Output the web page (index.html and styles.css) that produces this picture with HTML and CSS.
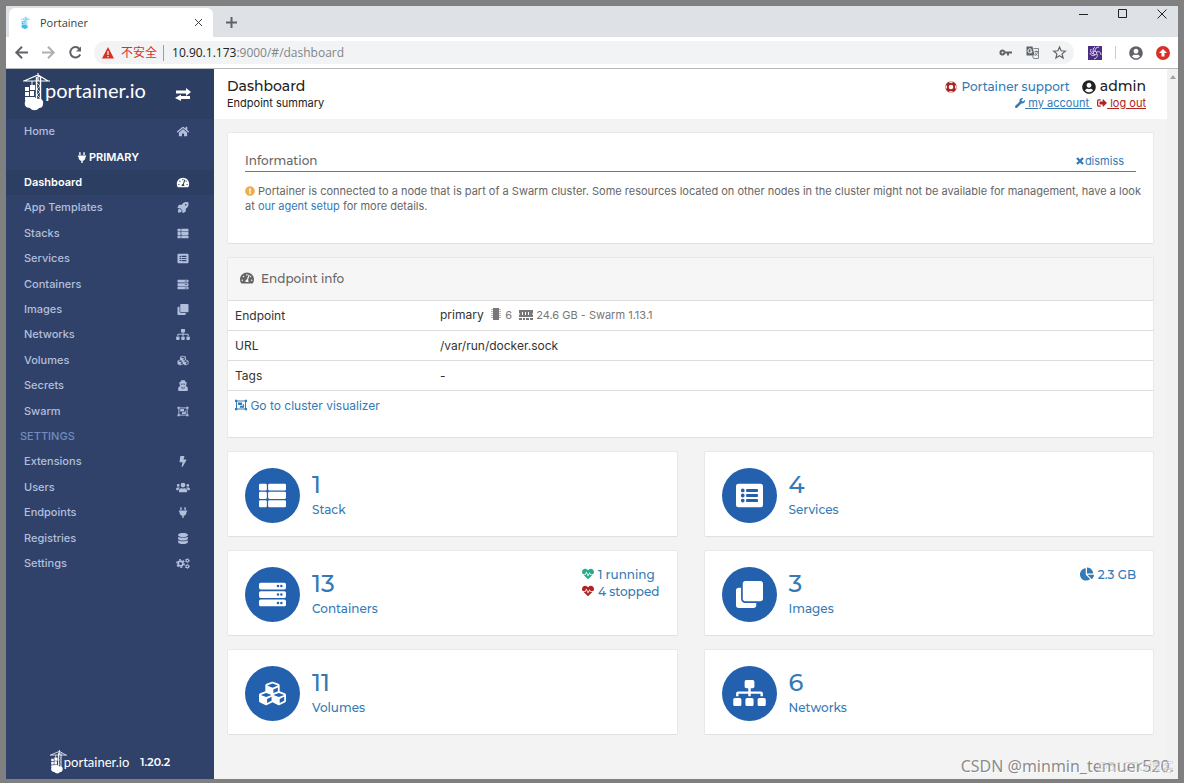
FILE: index.html
```html
<!DOCTYPE html>
<html lang="en">
<head>
<meta charset="utf-8">
<title>Portainer</title>
<link rel="stylesheet" href="styles.css">
</head>
<body>
<svg class="sprite" aria-hidden="true">
  <symbol id="i-home" viewBox="0 0 576 512"><path d="M280.37 148.26L96 300.11V464a16 16 0 0 0 16 16l112.06-.29a16 16 0 0 0 15.92-16V368a16 16 0 0 1 16-16h64a16 16 0 0 1 16 16v95.64a16 16 0 0 0 16 16.05L464 480a16 16 0 0 0 16-16V300L295.67 148.26a12.19 12.19 0 0 0-15.3 0zM571.6 251.47L488 182.56V44.05a12 12 0 0 0-12-12h-56a12 12 0 0 0-12 12v72.61L318.47 43a48 48 0 0 0-61 0L4.34 251.47a12 12 0 0 0-1.6 16.9l25.5 31A12 12 0 0 0 45.15 301l235.22-193.74a12.19 12.19 0 0 1 15.3 0L530.9 301a12 12 0 0 0 16.9-1.6l25.5-31a12 12 0 0 0-1.7-16.93z"/></symbol>
  <symbol id="i-plug" viewBox="0 0 384 512"><path d="M256 144V32c0-17.673 14.327-32 32-32s32 14.327 32 32v112h-64zm112 16H16c-8.837 0-16 7.163-16 16v32c0 8.837 7.163 16 16 16h16v32c0 77.406 54.969 141.971 128 156.796V512h64v-99.204c73.031-14.825 128-79.39 128-156.796v-32h16c8.837 0 16-7.163 16-16v-32c0-8.837-7.163-16-16-16zm-240-16V32c0-17.673-14.327-32-32-32S64 14.327 64 32v112h64z"/></symbol>
  <symbol id="i-gauge" viewBox="0 0 576 512"><path d="M288 32C128.94 32 0 160.94 0 320c0 52.8 14.25 102.26 39.06 144.8 5.61 9.62 16.3 15.2 27.44 15.2h443c11.14 0 21.83-5.58 27.44-15.2C561.75 422.26 576 372.8 576 320c0-159.06-128.94-288-288-288zm0 64c14.71 0 26.58 10.13 30.32 23.65-1.11 2.26-2.64 4.23-3.45 6.67l-9.22 27.67c-5.13 3.49-10.97 6.01-17.64 6.01-17.67 0-32-14.33-32-32S270.33 96 288 96zM96 384c-17.67 0-32-14.33-32-32s14.33-32 32-32 32 14.33 32 32-14.33 32-32 32zm48-160c-17.67 0-32-14.33-32-32s14.33-32 32-32 32 14.33 32 32-14.33 32-32 32zm246.77-72.41l-61.33 184C343.13 347.33 352 364.54 352 384c0 11.72-3.38 22.55-8.88 32H232.88c-5.5-9.45-8.88-20.28-8.88-32 0-33.94 26.5-61.43 59.9-63.59l61.34-184.01c4.17-12.56 17.73-19.45 30.36-15.17 12.57 4.19 19.35 17.79 15.17 30.36zm14.66 57.2l15.52-46.55c3.47-1.29 7.13-2.23 11.05-2.23 17.67 0 32 14.33 32 32s-14.33 32-32 32c-11.38-.01-20.89-6.28-26.57-15.22zM480 384c-17.67 0-32-14.33-32-32s14.33-32 32-32 32 14.33 32 32-14.33 32-32 32z"/></symbol>
  <symbol id="i-rocket" viewBox="0 0 512 512"><path fill-rule="evenodd" d="M505 19c-2-7-6-10-12-12C460 0 435 0 410 0 307 0 245 55 199 128H95c-16 0-35 12-43 26L3 253c-8 17 1 35 21 35h104l96 96v104c0 20 18 29 35 21l99-49c14-8 26-27 26-43V313c73-46 128-108 128-211 0-25 0-50-7-83zM384 168a40 40 0 1 1 0-80 40 40 0 0 1 0 80zM104 310c-60 0-84 40-84 182 110 0 182-24 182-84l-40-42z"/></symbol>
  <symbol id="i-thlist" viewBox="0 0 512 512"><path d="M24 32h101a24 24 0 0 1 24 24v80a24 24 0 0 1-24 24H24a24 24 0 0 1-24-24V56a24 24 0 0 1 24-24zM197 32h291a24 24 0 0 1 24 24v80a24 24 0 0 1-24 24H197a24 24 0 0 1-24-24V56a24 24 0 0 1 24-24zM24 184h101a24 24 0 0 1 24 24v88a24 24 0 0 1-24 24H24a24 24 0 0 1-24-24v-88a24 24 0 0 1 24-24zM197 184h291a24 24 0 0 1 24 24v88a24 24 0 0 1-24 24H197a24 24 0 0 1-24-24v-88a24 24 0 0 1 24-24zM24 344h101a24 24 0 0 1 24 24v88a24 24 0 0 1-24 24H24a24 24 0 0 1-24-24v-88a24 24 0 0 1 24-24zM197 344h291a24 24 0 0 1 24 24v88a24 24 0 0 1-24 24H197a24 24 0 0 1-24-24v-88a24 24 0 0 1 24-24z"/></symbol>
  <symbol id="i-listalt" viewBox="0 0 512 512"><path fill-rule="evenodd" d="M48 32h416a48 48 0 0 1 48 48v352a48 48 0 0 1-48 48H48a48 48 0 0 1-48-48V80a48 48 0 0 1 48-48zM128 124a36 36 0 1 0 0 72 36 36 0 0 0 0-72zm0 96a36 36 0 1 0 0 72 36 36 0 0 0 0-72zm0 96a36 36 0 1 0 0 72 36 36 0 0 0 0-72zM204 132a12 12 0 0 0-12 12v32a12 12 0 0 0 12 12h200a12 12 0 0 0 12-12v-32a12 12 0 0 0-12-12zm0 96a12 12 0 0 0-12 12v32a12 12 0 0 0 12 12h200a12 12 0 0 0 12-12v-32a12 12 0 0 0-12-12zm0 96a12 12 0 0 0-12 12v32a12 12 0 0 0 12 12h200a12 12 0 0 0 12-12v-32a12 12 0 0 0-12-12z"/></symbol>
  <symbol id="i-server" viewBox="0 0 512 512"><path fill-rule="evenodd" d="M32 32h448a32 32 0 0 1 32 32v64a32 32 0 0 1-32 32H32a32 32 0 0 1-32-32V64a32 32 0 0 1 32-32zm328 40a24 24 0 1 0 0 48 24 24 0 0 0 0-48zm64 0a24 24 0 1 0 0 48 24 24 0 0 0 0-48zM32 192h448a32 32 0 0 1 32 32v64a32 32 0 0 1-32 32H32a32 32 0 0 1-32-32v-64a32 32 0 0 1 32-32zm328 40a24 24 0 1 0 0 48 24 24 0 0 0 0-48zm64 0a24 24 0 1 0 0 48 24 24 0 0 0 0-48zM32 352h448a32 32 0 0 1 32 32v64a32 32 0 0 1-32 32H32a32 32 0 0 1-32-32v-64a32 32 0 0 1 32-32zm328 40a24 24 0 1 0 0 48 24 24 0 0 0 0-48zm64 0a24 24 0 1 0 0 48 24 24 0 0 0 0-48z"/></symbol>
  <symbol id="i-clone" viewBox="0 0 512 512"><path d="M464 0c26.51 0 48 21.49 48 48v288c0 26.51-21.49 48-48 48H176c-26.51 0-48-21.49-48-48V48c0-26.51 21.49-48 48-48h288M176 416c-44.112 0-80-35.888-80-80V128H48c-26.51 0-48 21.49-48 48v288c0 26.51 21.49 48 48 48h288c26.51 0 48-21.49 48-48v-48H176z"/></symbol>
  <symbol id="i-sitemap" viewBox="0 0 640 512"><path d="M128 352H32c-17.67 0-32 14.33-32 32v96c0 17.67 14.33 32 32 32h96c17.67 0 32-14.33 32-32v-96c0-17.67-14.33-32-32-32zm-24-80h192v48h48v-48h192v48h48v-57.59c0-21.17-17.23-38.41-38.41-38.41H344v-64h40c17.67 0 32-14.33 32-32V32c0-17.67-14.33-32-32-32H256c-17.67 0-32 14.33-32 32v96c0 17.67 14.33 32 32 32h40v64H94.41C73.23 224 56 241.23 56 262.41V320h48v-48zm264 80h-96c-17.67 0-32 14.33-32 32v96c0 17.67 14.33 32 32 32h96c17.67 0 32-14.33 32-32v-96c0-17.67-14.33-32-32-32zm240 0h-96c-17.67 0-32 14.33-32 32v96c0 17.67 14.33 32 32 32h96c17.67 0 32-14.33 32-32v-96c0-17.67-14.33-32-32-32z"/></symbol>
  <symbol id="i-cubes" viewBox="0 0 512 512"><path d="M488.6 250.2L392 214V105.5c0-15-9.3-28.4-23.4-33.7l-100-37.5c-8.1-3.1-17.1-3.1-25.3 0l-100 37.5c-14.1 5.3-23.4 18.7-23.4 33.7V214l-96.6 36.2C9.3 255.5 0 268.9 0 283.9V394c0 13.6 7.7 26.1 19.9 32.2l100 50c10.1 5.1 22.1 5.1 32.2 0l103.9-52 103.9 52c10.1 5.1 22.1 5.1 32.2 0l100-50c12.2-6.1 19.9-18.6 19.9-32.2V283.9c0-15-9.3-28.4-23.4-33.7zM358 214.8l-85 31.9v-68.2l85-37v73.3zM154 104.1l102-38.2 102 38.2v.6l-102 41.4-102-41.4v-.6zm84 291.1l-85 42.5v-79.1l85-38.8v75.4zm0-112l-102 41.4-102-41.4v-.6l102-38.2 102 38.2v.6zm240 112l-85 42.5v-79.1l85-38.8v75.4zm0-112l-102 41.4-102-41.4v-.6l102-38.2 102 38.2v.6z"/></symbol>
  <symbol id="i-secret" viewBox="0 0 448 512"><path fill-rule="evenodd" d="M96 100c20-4 30-60 62-96 14-10 42 12 66 12S276-6 290 4c32 36 42 92 62 96 30 6 64 18 64 28 0 8-14 16-32 22 4 50-2 100-34 136l40 14c34 12 58 50 58 90v90c0 18-14 32-32 32H32c-18 0-32-14-32-32v-90c0-40 24-78 58-90l40-14c-32-36-38-86-34-136-18-6-32-14-32-22 0-10 34-22 64-28zM124 176c4 30 14 44 42 44 26 0 38-12 44-34h28c6 22 18 34 44 34 28 0 38-14 42-44zM140 310l44 130 20-80-24-40zM308 310l-44 130-20-80 24-40z"/></symbol>
  <symbol id="i-group" viewBox="0 0 512 512"><path d="M64 88h384v336H64z" fill="none" stroke="currentColor" stroke-width="44"/><path d="M0 32h96v96H0zM416 32h96v96h-96zM0 384h96v96H0zM416 384h96v96h-96zM128 144h176v112H128zM336 224h48v144H208v-80h128z"/></symbol>
  <symbol id="i-bolt" viewBox="0 0 320 512"><path d="M296 160H180.6l42.6-129.8C227.2 15 215.7 0 200 0H56C44 0 33.8 8.9 32.2 20.8l-32 240C-1.7 275.2 9.5 288 24 288h118.7L96.6 482.5c-3.6 15.2 8 29.5 23.3 29.5 8.4 0 16.4-4.4 20.8-12l176-304c9.3-15.9-2.2-36-20.7-36z"/></symbol>
  <symbol id="i-users" viewBox="0 0 640 512"><path d="M96 96a64 64 0 1 1 0 128 64 64 0 0 1 0-128zM544 96a64 64 0 1 1 0 128 64 64 0 0 1 0-128zM320 32a112 112 0 1 1 0 224 112 112 0 0 1 0-224zM64 256h64c18 0 34 7 45 19-40 22-69 61-75 109H32c-18 0-32-14-32-32v-32c0-35 29-64 64-64zM512 256h64c35 0 64 29 64 64v32c0 18-14 32-32 32h-66c-6-48-35-87-75-109 11-12 27-19 45-19zM243 288h8c44 21 94 21 138 0h8c64 0 115 51 115 115v29c0 27-21 48-48 48H176c-27 0-48-21-48-48v-29c0-64 51-115 115-115z"/></symbol>
  <symbol id="i-database" viewBox="0 0 448 512"><path d="M448 73.143v45.714C448 159.143 347.667 192 224 192S0 159.143 0 118.857V73.143C0 32.857 100.333 0 224 0s224 32.857 224 73.143zM448 176v102.857C448 319.143 347.667 352 224 352S0 319.143 0 278.857V176c48.125 33.143 136.208 48.572 224 48.572S399.874 209.143 448 176zm0 160v102.857C448 479.143 347.667 512 224 512S0 479.143 0 438.857V336c48.125 33.143 136.208 48.572 224 48.572S399.874 369.143 448 336z"/></symbol>
  <symbol id="i-cogs" viewBox="0 0 640 512"><g fill="none" stroke="currentColor"><circle cx="205" cy="256" r="112" stroke-width="84"/><circle cx="205" cy="256" r="176" stroke-width="56" stroke-dasharray="92 92"/><circle cx="520" cy="122" r="62" stroke-width="52"/><circle cx="520" cy="122" r="98" stroke-width="34" stroke-dasharray="51 51"/><circle cx="520" cy="390" r="62" stroke-width="52"/><circle cx="520" cy="390" r="98" stroke-width="34" stroke-dasharray="51 51"/></g></symbol>
  <symbol id="i-warn" viewBox="0 0 512 512"><path d="M504 256c0 136.997-111.043 248-248 248S8 392.997 8 256C8 119.083 119.043 8 256 8s248 111.083 248 248zm-248 50c-25.405 0-46 20.595-46 46s20.595 46 46 46 46-20.595 46-46-20.595-46-46-46zm-43.673-165.346l7.418 136c.347 6.364 5.609 11.346 11.982 11.346h48.546c6.373 0 11.635-4.982 11.982-11.346l7.418-136c.375-6.874-5.098-12.654-11.982-12.654h-63.383c-6.884 0-12.356 5.78-11.981 12.654z"/></symbol>
  <symbol id="i-user" viewBox="0 0 496 512"><path d="M248 8C111 8 0 119 0 256s111 248 248 248 248-111 248-248S385 8 248 8zm0 96c48.6 0 88 39.4 88 88s-39.4 88-88 88-88-39.4-88-88 39.4-88 88-88zm0 344c-58.7 0-111.3-26.6-146.5-68.2 18.8-35.4 55.6-59.8 98.5-59.8 2.4 0 4.8.4 7.1 1.1 13 4.2 26.6 6.9 40.9 6.9 14.3 0 28-2.7 40.9-6.9 2.3-.7 4.7-1.1 7.1-1.1 42.9 0 79.7 24.4 98.5 59.8C359.3 421.4 306.7 448 248 448z"/></symbol>
  <symbol id="i-wrench" viewBox="0 0 512 512"><path d="M507.73 109.1c-2.24-9.03-13.54-12.09-20.12-5.51l-74.36 74.36-67.88-11.31-11.31-67.88 74.36-74.36c6.62-6.62 3.43-17.9-5.66-20.16-47.38-11.74-99.55.91-136.58 37.93-39.64 39.64-50.55 97.1-34.05 147.2L18.74 402.76c-24.99 24.99-24.99 65.51 0 90.5 24.99 24.99 65.51 24.99 90.5 0l213.21-213.21c50.12 16.71 107.47 5.68 147.37-34.22 37.07-37.07 49.7-89.32 37.91-136.73z"/></symbol>
  <symbol id="i-signout" viewBox="0 0 512 512"><path d="M497 273L329 441c-15 15-41 4.500-41-17v-96H152c-13.300 0-24-10.700-24-24v-96c0-13.300 10.700-24 24-24h136V88c0-21.400 25.900-32 41-17l168 168c9.300 9.400 9.300 24.600 0 34zM192 436v-40c0-6.600-5.400-12-12-12H96c-17.700 0-32-14.300-32-32V160c0-17.700 14.300-32 32-32h84c6.600 0 12-5.400 12-12V76c0-6.600-5.400-12-12-12H96c-53 0-96 43-96 96v192c0 53 43 96 96 96h84c6.600 0 12-5.400 12-12z"/></symbol>
  <symbol id="i-ring" viewBox="0 0 512 512"><circle cx="256" cy="256" r="172" fill="none" stroke="currentColor" stroke-width="152"/><g fill="none" stroke="#fff" stroke-width="56"><path d="M190 60q66-24 132 0M190 452q66 24 132 0M60 190q-24 66 0 132M452 190q24 66 0 132"/></g></symbol>
  <symbol id="i-heart" viewBox="0 0 512 512"><path d="M320.2 243.8l-49.7 99.4c-6 12.1-23.4 11.7-28.9-.6l-56.9-126.3-30 71.7H60.6l182.5 186.5c7.1 7.3 18.6 7.3 25.7 0L451.4 288H342.3l-22.1-44.2zM473.7 73.9l-2.4-2.5c-51.5-52.6-135.8-52.6-187.400 0L256 100l-27.9-28.5c-51.5-52.7-135.9-52.7-187.400 0l-2.4 2.4C-10.4 123.7-12.5 203 31 256h102.400l35.9-86.2c5.4-12.900 23.600-13.100 29.300-.4l58.200 129.300 49-97.900c5.900-11.800 22.700-11.800 28.600 0l27.600 55.200H481c43.500-53 41.400-132.300-7.300-182.100z"/></symbol>
  <symbol id="i-pie" viewBox="0 0 544 512"><path d="M527.79 288H290.5l158.03 158.03c6.04 6.04 15.98 6.53 22.19.68 38.7-36.46 65.32-85.61 73.13-140.86 1.34-9.46-6.51-17.85-16.06-17.85zm-15.83-64.8C503.72 103.74 408.26 8.28 288.8.04 279.68-.59 272 7.1 272 16.24V240h223.77c9.14 0 16.82-7.68 16.19-16.8zM224 288V50.71c0-9.55-8.39-17.4-17.84-16.06C86.99 51.49-4.1 155.6.14 280.37 4.5 408.51 114.83 513.59 243.03 511.98c50.4-.63 96.97-16.87 135.26-44.03 7.9-5.6 8.42-17.23 1.57-24.08L224 288z"/></symbol>
  <symbol id="i-times" viewBox="0 0 10 10"><path d="M2 2l6 6M8 2l-6 6" fill="none" stroke="currentColor" stroke-width="2.300"/></symbol>
  <symbol id="i-chip" viewBox="0 0 12 12"><path d="M3 0h6v12H3z"/><path d="M1 1.500h10M1 3.500h10M1 5.500h10M1 7.500h10M1 9.500h10" stroke="currentColor" stroke-width="1" opacity=".5"/></symbol>
  <symbol id="i-memory" viewBox="0 0 14 10"><path fill-rule="evenodd" d="M0 0h14v3l-1 1 1 1v2H0V5l1-1-1-1zM3 2v3h1V2zm3 0v3h1V2zm3 0v3h1V2zM0 8h3v2H0zm4 0h2v2H4zm3 0h3v2H7zm4 0h3v2h-3z"/></symbol>
  <symbol id="i-crane" viewBox="0 0 27 38"><g fill="none" stroke="currentColor"><path d="M0 8h27M1 8l14-6 10 6M15 0v8" stroke-width="1.200"/><path d="M13.500 4v25M17.500 4v25" stroke-width="1.400"/><path d="M14 10l3 3-3 3 3 3-3 3 3 3" stroke-width=".7"/><path d="M9 8v5" stroke-width="1"/></g><path d="M7 12h5v5H7zM2 14h4v4H2zM2 19h4v4H2zM7 18h4v5H7zM2 24h10v3H2z"/><path d="M6 25c3-2 6-1 8 1 4-1 7 1 6 5 0 3-2 4-4 4-2 3-7 3-9 0-4 0-6-3-5-6 0-3 2-4 4-4z"/></symbol>
</svg>

<div class="tabstrip">
  <div class="tab">
    <svg class="tab-logo"><use href="#i-crane"/></svg>
    <span class="tab-title">Portainer</span>
    <button class="plain" aria-label="Close tab"><svg class="s9" viewBox="0 0 9 9"><path d="M1 1l7 7M8 1L1 8" class="line"/></svg></button>
  </div>
  <button class="plain new-tab" aria-label="New tab"><svg class="s11" viewBox="0 0 11 11"><path d="M5.500 0v11M0 5.500h11" class="line"/></svg></button>
  <div class="window-buttons">
    <button class="plain" aria-label="Minimize"><svg class="s10" viewBox="0 0 10 10"><path d="M0 5.500h9" class="dark"/></svg></button>
    <button class="plain" aria-label="Maximize"><svg class="s10" viewBox="0 0 10 10"><path d="M.5.5h8v8h-8z" class="dark"/></svg></button>
    <button class="plain" aria-label="Close"><svg class="s10" viewBox="0 0 10 10"><path d="M.5.5l9 9M9.500.5l-9 9" class="dark"/></svg></button>
  </div>
</div>

<div class="toolbar">
  <button class="plain" aria-label="Back"><svg class="s13" viewBox="0 0 13 13"><path d="M13 6.500H1M7 .8L1.300 6.500 7 12.200" class="line"/></svg></button>
  <button class="plain faded" aria-label="Forward"><svg class="s13" viewBox="0 0 13 13"><path d="M0 6.500h12M6 .8l5.700 5.700L6 12.200" class="line"/></svg></button>
  <button class="plain" aria-label="Reload"><svg class="s13" viewBox="0 0 13 13"><path d="M11.200 8.500A5.200 5.200 0 1 1 10.500 3" class="line"/><path d="M12 .5v5H7z" fill="#5f6368"/></svg></button>
  <div class="address">
    <svg class="s12" viewBox="0 0 12 12"><path d="M6 0l6 11.500H0z" fill="#d93025"/><path d="M6 4v4M6 9v1.300" stroke="#fff" stroke-width="1.200"/></svg>
    <span class="insecure">不安全</span>
    <span class="url">10.90.1.173<span class="url-path">:9000/#/dashboard</span></span>
    <svg class="s13" viewBox="0 0 13 13"><path d="M3.500 3.500a3 3 0 1 0 2.800 4H8v2h2v-2h3v-2H6.300a3 3 0 0 0-2.800-2zm0 2a1 1 0 1 1 0 2 1 1 0 0 1 0-2z" fill="#5f6368" fill-rule="evenodd"/></svg>
    <svg class="s13" viewBox="0 0 13 13"><path d="M.5.5h6l2 9h-8z" fill="#5f6368"/><path d="M7.500 2.500h5v10h-5l-1-3" fill="none" stroke="#80868b"/><path d="M5.500 3.500a2 2 0 1 0 .5 1.500H4" fill="none" stroke="#fff"/><path d="M8.500 5.500h3.500M10.200 4.500v1M11.500 5.500c0 2-1 3-2.500 4M9 6.500c.5 1.500 1.500 2.500 2.500 3" fill="none" stroke="#5f6368" stroke-width=".8"/></svg>
    <svg class="s13" viewBox="0 0 13 13"><path d="M6.500 1l1.600 3.800 4.200.4-3.200 2.700 1 4.100-3.600-2.200L2.900 12l1-4.100L.7 5.200l4.200-.4z" fill="none" stroke="#5f6368" stroke-width="1.200"/></svg>
  </div>
  <div class="extensions">
    <svg class="s14" viewBox="0 0 14 14"><path d="M0 0h14v14H0z" fill="#4b2e83"/><g fill="none" stroke="#e3dcf0" stroke-width="1"><path d="M7 5c0-2 1-4 4-4M9 6c2-1 4 0 4 3M9 8c1 2 0 4-3 5M7 9c-2 1-4 1-5-2M5 8c-2-1-3-3-2-5M5 6c0-2 0-4 2-5"/><circle cx="7" cy="7" r="1.800"/></g></svg>
    <span class="bar"></span>
    <svg class="s14"><use href="#i-user"/></svg>
    <svg class="s14" viewBox="0 0 14 14"><circle cx="7" cy="7" r="7" fill="#d93025"/><path d="M7 3l4 4H8.500v3.500h-3V7H3z" fill="#fff"/></svg>
  </div>
</div>

<div class="app">
  <nav class="sidebar">
    <div class="brand">
      <svg class="brand-logo"><use href="#i-crane"/></svg><span class="brand-name">portainer.io</span>
      <button class="plain toggle" aria-label="Toggle sidebar"><svg viewBox="0 0 16 13"><path d="M1 2.500h10V0l5 4-5 4V5.500H1zM15 8h-9V6.500L0 10l6 3v-2h9z" fill="#fff"/></svg></button>
    </div>
    <ul class="menu">
      <li><a href="#">Home<svg><use href="#i-home"/></svg></a></li>
      <li class="endpoint"><svg><use href="#i-plug"/></svg>PRIMARY</li>
      <li class="active"><a href="#">Dashboard<svg><use href="#i-gauge"/></svg></a></li>
      <li><a href="#">App Templates<svg><use href="#i-rocket"/></svg></a></li>
      <li><a href="#">Stacks<svg><use href="#i-thlist"/></svg></a></li>
      <li><a href="#">Services<svg><use href="#i-listalt"/></svg></a></li>
      <li><a href="#">Containers<svg><use href="#i-server"/></svg></a></li>
      <li><a href="#">Images<svg><use href="#i-clone"/></svg></a></li>
      <li><a href="#">Networks<svg><use href="#i-sitemap"/></svg></a></li>
      <li><a href="#">Volumes<svg><use href="#i-cubes"/></svg></a></li>
      <li><a href="#">Secrets<svg><use href="#i-secret"/></svg></a></li>
      <li><a href="#">Swarm<svg><use href="#i-group"/></svg></a></li>
      <li class="section">SETTINGS</li>
      <li><a href="#">Extensions<svg><use href="#i-bolt"/></svg></a></li>
      <li><a href="#">Users<svg><use href="#i-users"/></svg></a></li>
      <li><a href="#">Endpoints<svg><use href="#i-plug"/></svg></a></li>
      <li><a href="#">Registries<svg><use href="#i-database"/></svg></a></li>
      <li><a href="#">Settings<svg><use href="#i-cogs"/></svg></a></li>
    </ul>
    <div class="version"><svg><use href="#i-crane"/></svg><span class="version-name">portainer.io</span><strong>1.20.2</strong></div>
  </nav>

  <main class="page">
    <header class="page-head">
      <div>
        <h1>Dashboard</h1>
        <p>Endpoint summary</p>
      </div>
      <div class="account">
        <div class="account-top">
          <a href="#" class="support"><svg class="s12 red"><use href="#i-ring"/></svg>Portainer support</a>
          <span class="user"><svg class="s14"><use href="#i-user"/></svg>admin</span>
        </div>
        <div class="account-links">
          <a href="#"><svg class="s10"><use href="#i-wrench"/></svg> my account </a>
          <a href="#" class="red"><svg class="s10"><use href="#i-signout"/></svg> log out</a>
        </div>
      </div>
    </header>

    <div class="content">
      <section class="card info">
        <div class="info-head"><h2>Information</h2><button class="plain dismiss"><svg class="s10"><use href="#i-times"/></svg>dismiss</button></div>
        <p><svg class="s10 orange"><use href="#i-warn"/></svg> Portainer is connected to a node that is part of a Swarm cluster. Some resources located on other nodes in the cluster might not be available for management, have a look at <a href="#">our agent setup</a> for more details.</p>
      </section>

      <section class="card">
        <h2 class="card-head"><svg class="s14"><use href="#i-gauge"/></svg>Endpoint info</h2>
        <table>
          <tbody>
            <tr><th scope="row">Endpoint</th><td>primary <span class="specs"><svg class="s12"><use href="#i-chip"/></svg> 6 <svg class="mem"><use href="#i-memory"/></svg> 24.6 GB - Swarm 1.13.1</span></td></tr>
            <tr><th scope="row">URL</th><td>/var/run/docker.sock</td></tr>
            <tr><th scope="row">Tags</th><td>-</td></tr>
            <tr class="last"><td colspan="2"><a href="#"><svg class="s12"><use href="#i-group"/></svg> Go to cluster visualizer</a></td></tr>
          </tbody>
        </table>
      </section>

      <div class="tiles">
        <a class="card tile" href="#"><span class="disc"><svg><use href="#i-thlist"/></svg></span><span class="count"><b>1</b>Stack</span></a>
        <a class="card tile" href="#"><span class="disc"><svg><use href="#i-listalt"/></svg></span><span class="count"><b>4</b>Services</span></a>
        <a class="card tile" href="#"><span class="disc"><svg><use href="#i-server"/></svg></span><span class="count"><b>13</b>Containers</span>
          <span class="stats"><span><svg class="s12 green"><use href="#i-heart"/></svg>1 running</span><span><svg class="s12 red"><use href="#i-heart"/></svg>4 stopped</span></span></a>
        <a class="card tile" href="#"><span class="disc"><svg><use href="#i-clone"/></svg></span><span class="count"><b>3</b>Images</span>
          <span class="stats"><span><svg class="s14"><use href="#i-pie"/></svg>2.3 GB</span></span></a>
        <a class="card tile" href="#"><span class="disc"><svg><use href="#i-cubes"/></svg></span><span class="count"><b>11</b>Volumes</span></a>
        <a class="card tile" href="#"><span class="disc wide"><svg><use href="#i-sitemap"/></svg></span><span class="count"><b>6</b>Networks</span></a>
      </div>
    </div>
  </main>
  <div class="scroll-track"><span class="arrow"></span></div>
</div>

<div class="watermark">CSDN @minmin_temuer520.</div>
<div class="watermark faint">@51CTO博客</div>
</body>
</html>
```

FILE: styles.css
```css
* { box-sizing: border-box; }

body {
  margin: 0;
  padding: 6px 6px 4px;
  min-height: 100vh;
  display: flex;
  flex-direction: column;
  position: relative;
  background: #808080;
  color: #333;
  font: 500 12px/15px Montserrat, Inter, sans-serif;
}

.sprite { display: none; }
svg { fill: currentColor; flex: none; overflow: visible; }
a { color: #337ab7; text-decoration: none; }
h1, h2, p, ul { margin: 0; padding: 0; font-weight: 500; }

.plain {
  display: flex;
  align-items: center;
  padding: 0;
  border: 0;
  background: none;
  color: inherit;
  font: inherit;
}

.line { fill: none; stroke: #5f6368; stroke-width: 2px; }
.s9 .line { stroke-width: 1px; stroke: #3c4043; }
.dark { fill: none; stroke: #222; }
.s9 { width: 9px; height: 9px; }
.s10 { width: 10px; height: 10px; }
.s11 { width: 11px; height: 11px; }
.s12 { width: 12px; height: 12px; }
.s13 { width: 13px; height: 13px; }
.s14 { width: 14px; height: 14px; }
.red { color: #ae2323; }
.green { color: #23ae89; }
.orange { color: #f0ad4e; }

/* browser window */
.tabstrip {
  display: flex;
  align-items: flex-end;
  height: 31px;
  padding-left: 3px;
  background: #dee1e6;
}
.tab {
  display: flex;
  align-items: center;
  width: 204px;
  height: 29px;
  padding: 0 10px 0 12px;
  border-radius: 6px 6px 0 0;
  background: #fff;
}
.tab-logo { width: 9px; height: 14px; color: #3bbced; }
.tab-title {
  flex: 1;
  padding-left: 10px;
  color: #3c4043;
  font: 11px/15px "Open Sans", sans-serif;
}
.new-tab { height: 29px; padding: 0 13px; }
.window-buttons {
  display: flex;
  align-self: flex-start;
  gap: 29px;
  margin-left: auto;
  padding: 3px 11px 0 0;
}
.toolbar {
  display: flex;
  align-items: center;
  gap: 14px;
  height: 32px;
  padding: 0 8px 0 9px;
  border-bottom: 1px solid #b6b8bb;
  background: #fff;
}
.faded { opacity: .5; }
.address {
  display: flex;
  flex: 1;
  align-items: center;
  gap: 14px;
  height: 23px;
  margin-left: -2px;
  padding: 0 8px;
  border-radius: 12px;
  background: #f1f3f4;
  font: 12px/16px "Open Sans", "Noto Sans CJK SC", sans-serif;
}
.insecure {
  margin-left: -7px;
  padding-right: 6px;
  border-right: 1px solid #9aa0a6;
  color: #d93025;
}
.url { flex: 1; margin-left: -6px; color: #202124; }
.url-path { color: #80868b; }
.extensions { display: flex; align-items: center; gap: 13px; color: #5f6368; }
.bar { width: 1px; height: 13px; background: #ccc; }

/* application */
.app { display: flex; flex: 1; background: #f3f3f3; }

.sidebar {
  display: flex;
  flex-direction: column;
  width: 208px;
  background: #30426a;
  font: 500 11px/15px Inter, sans-serif;
}
.brand {
  display: flex;
  align-items: center;
  height: 50px;
  padding: 0 23px 4px 17px;
  background: #2d3e63;
  color: #fff;
}
.brand-logo { width: 27px; height: 38px; }
.brand-name { margin-left: -5px; padding-bottom: 5px; font: 20px/24px Lato, sans-serif; }
.toggle { margin-left: auto; padding-top: 4px; }
.toggle svg { width: 16px; height: 13px; }

.menu { list-style: none; }
.menu li { height: 25px; }
.menu li:nth-child(5n+2), .menu li:nth-child(5n+5) { height: 26px; }
.menu a {
  display: flex;
  align-items: center;
  justify-content: space-between;
  height: 100%;
  padding: 0 24px 0 18px;
  color: #b2bfdc;
}
.menu svg { width: 14px; height: 11px; }
.menu .endpoint {
  display: flex;
  align-items: center;
  justify-content: center;
  padding-right: 6px;
  color: #fff;
  font-weight: 600;
}
.menu .active { background: #2c3e61; }
.menu .active a { color: #fff; font-weight: 600; }
.menu .section {
  display: flex;
  align-items: center;
  padding-left: 14px;
  color: #738bc0;
}
.version {
  display: flex;
  align-items: center;
  justify-content: center;
  margin-top: auto;
  padding-bottom: 5px;
  color: #fff;
}
.version svg { width: 17px; height: 24px; }
.version-name { margin: 0 11px 0 -3px; font: 13px/16px Lato, sans-serif; }
.version strong { font: 600 11px/16px Montserrat, Inter, sans-serif; }

.page { flex: 1; min-width: 0; }
.page-head {
  display: flex;
  justify-content: space-between;
  height: 50px;
  padding: 9px 21px 0 13px;
  background: #fff;
  color: #222;
}
.page-head h1 { font-size: 14px; line-height: 17px; }
.page-head p { font: 11px/17px Inter, sans-serif; }
.account-top, .account-links { display: flex; justify-content: flex-end; align-items: center; }
.account-top { gap: 12px; line-height: 17px; }
.support, .user { display: flex; align-items: center; gap: 4px; }
.user { font-size: 14px; }
.account-links { gap: 5px; font: 11px/17px Inter, sans-serif; }
.account-links a { text-decoration: underline; white-space: pre; }
.account-links svg { vertical-align: -1px; }

.content {
  display: flex;
  flex-direction: column;
  gap: 13px;
  padding: 13px;
}
.card {
  border: 1px solid #e8e8e8;
  border-bottom-color: #e0e0e0;
  border-radius: 2px;
  background: #fff;
}
.info { min-height: 112px; padding: 19px 7px 19px 17px; color: #666; }
.info-head {
  display: flex;
  justify-content: space-between;
  margin: 0 10px 12px 0;
  padding: 0 12px 1px 0;
  border-bottom: 1px solid #777;
}
.info h2 { font-size: 12px; line-height: 18px; }
.info p { font: 11px/15px Inter, sans-serif; }
.info p svg { vertical-align: -1px; }
.dismiss { color: #337ab7; font: 11px/15px Inter, sans-serif; }
.card-head {
  display: flex;
  align-items: center;
  gap: 7px;
  height: 42px;
  padding: 0 12px 2px;
  background: #f6f6f6;
  color: #666;
  font-size: 12px;
}

table { width: 100%; border-collapse: collapse; font: 12px/15px Inter, sans-serif; }
th, td {
  height: 30px;
  padding: 0 7px 1px;
  border-top: 1px solid #ddd;
  text-align: left;
  font-weight: 400;
}
th { width: 205px; }
.last td { height: 46px; padding-bottom: 17px; }
.specs { margin-left: 3px; color: #777; font-size: 11px; }
td svg { vertical-align: -1px; }
.mem { width: 14px; height: 10px; margin-left: 4px; }

.tiles { display: grid; grid-template-columns: 1fr 1fr; gap: 13px 26px; }
.tile {
  display: flex;
  align-items: center;
  height: 86px;
  padding: 3px 17px 0;
}
.count { padding-bottom: 3px; }
.count b { display: block; padding-bottom: 3px; font-size: 24px; line-height: 28px; font-weight: 500; }
.disc {
  display: flex;
  align-items: center;
  justify-content: center;
  width: 55px;
  height: 55px;
  margin-right: 12px;
  border-radius: 50%;
  background: #2361ae;
  color: #fff;
}
.disc svg { width: 27px; height: 27px; }
.wide svg { width: 33px; height: 26px; }
.stats { align-self: flex-start; margin-left: auto; padding-top: 12px; }
.stats span { display: flex; align-items: center; gap: 4px; line-height: 17px; }

.scroll-track { width: 11px; padding: 6px 3px; background: #f1f1f1; }
.arrow {
  display: block;
  border: 3px solid transparent;
  border-top: 0;
  border-bottom: 4px solid #a3a3a3;
}

/* stamped over the window's corner */
.watermark {
  position: absolute;
  right: 10px;
  bottom: 6px;
  color: #8c8c8c;
  font: 16px/22px "Noto Sans", "Noto Sans CJK SC", sans-serif;
  text-shadow: 1px 1px #fff;
}
.faint { font-size: 13px; color: #bbb; opacity: .5; }
```
